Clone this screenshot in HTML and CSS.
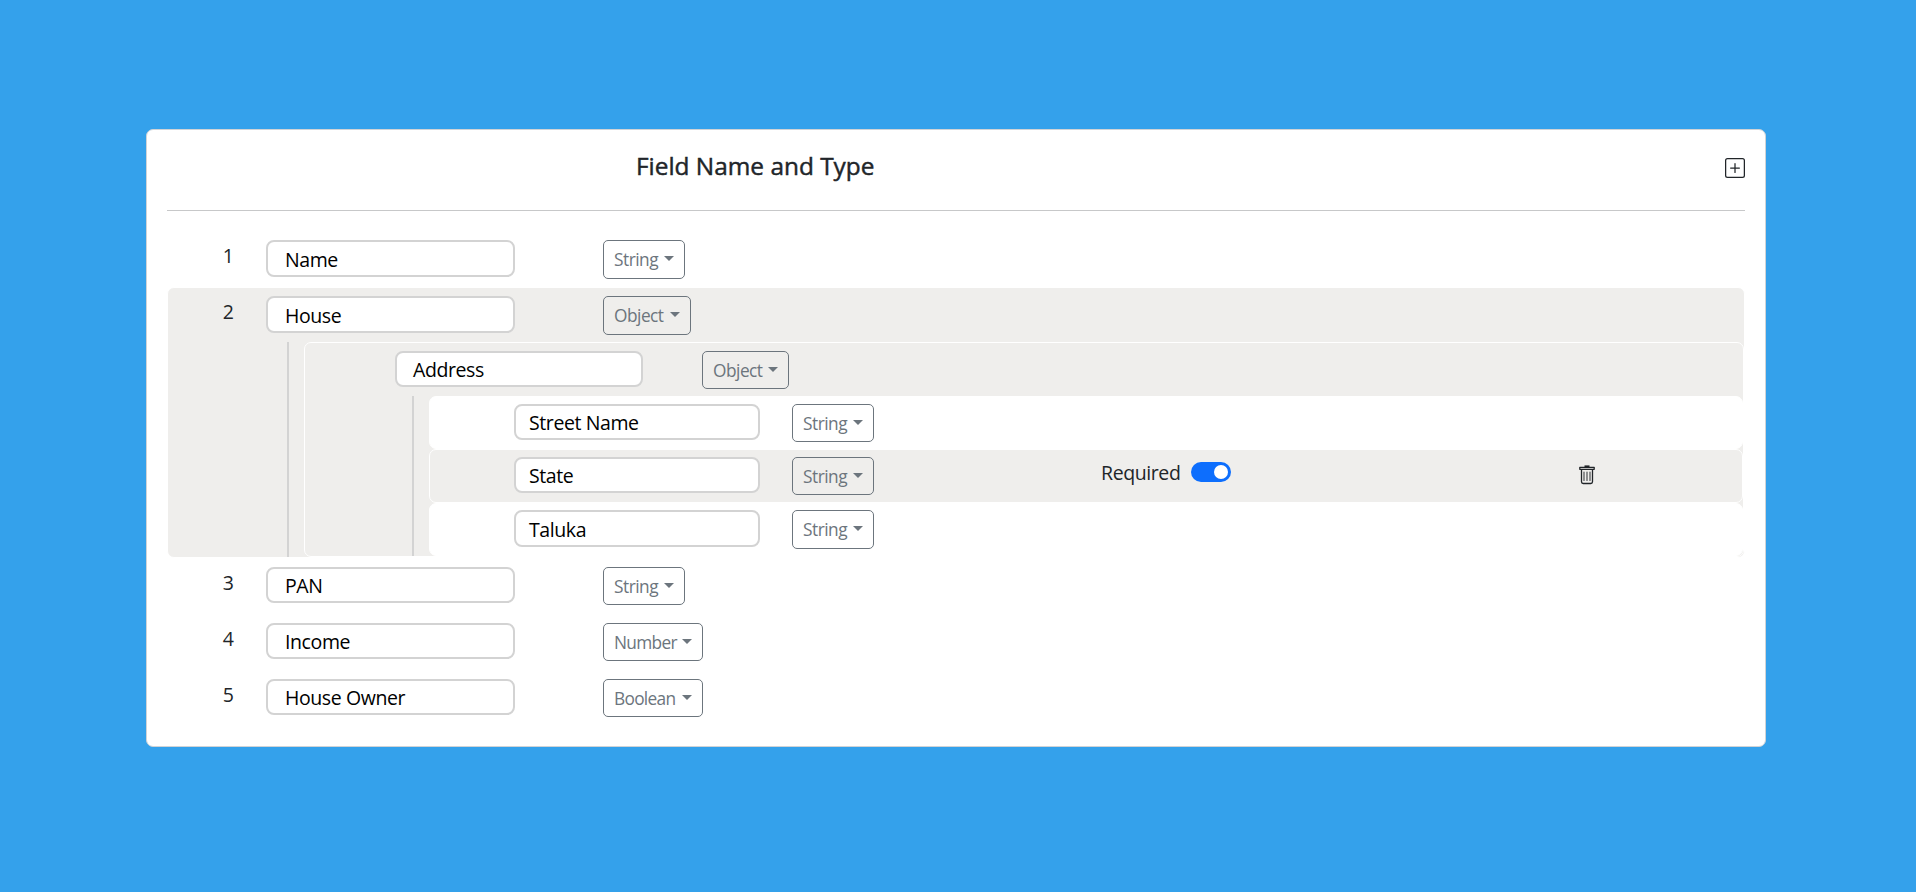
FILE: index.html
```html
<!DOCTYPE html>
<html lang="en">
<head>
<meta charset="utf-8">
<title>Schema Builder</title>
<link rel="stylesheet" href="styles.css">
</head>
<body>
<main class="card">
  <header class="card-header">
    <h1 class="title">Field Name and Type</h1>
    <svg class="icon-add" width="20" height="20" viewBox="0 0 16 16" fill="currentColor"><path d="M14 1a1 1 0 0 1 1 1v12a1 1 0 0 1-1 1H2a1 1 0 0 1-1-1V2a1 1 0 0 1 1-1h12zM2 0a2 2 0 0 0-2 2v12a2 2 0 0 0 2 2h12a2 2 0 0 0 2-2V2a2 2 0 0 0-2-2H2z"/><path d="M8 4a.5.5 0 0 1 .5.5v3h3a.5.5 0 0 1 0 1h-3v3a.5.5 0 0 1-1 0v-3h-3a.5.5 0 0 1 0-1h3v-3A.5.5 0 0 1 8 4z"/></svg>
  </header>
  <section class="rows">
    <div class="row">
      <div class="line"><span class="num">1</span><div class="field tall">Name</div><button class="type tall string">String</button></div>
    </div>
    <div class="row active group">
      <div class="line"><span class="num">2</span><div class="field tall">House</div><button class="type tall object">Object</button></div>
      <div class="children">
        <div class="row active nested">
          <div class="line"><div class="field">Address</div><button class="type object">Object</button></div>
          <div class="children inner">
            <div class="row leaf"><div class="line"><div class="field">Street Name</div><button class="type string">String</button></div></div>
            <div class="row leaf active">
              <div class="line"><div class="field">State</div><button class="type string">String</button>
                <div class="required"><span class="req-label">Required</span><span class="switch"><span class="knob"></span></span></div>
                <svg class="icon-trash" width="16" height="20" viewBox="0 0 16 20"><path class="lid" d="M.8 2.300h14.400v2H.8z"/><path class="handle" d="M5.500 1.200h5"/><path class="bin" d="M2.500 4.800v12a1.700 1.700 0 0 0 1.700 1.700h7.600a1.700 1.700 0 0 0 1.700-1.700v-12"/><path class="slots" d="M5 7v8.500M8 7v8.500M11 7v8.500"/></svg>
              </div>
            </div>
            <div class="row leaf"><div class="line"><div class="field tall">Taluka</div><button class="type tall string">String</button></div></div>
          </div>
        </div>
      </div>
    </div>
    <div class="row">
      <div class="line"><span class="num">3</span><div class="field">PAN</div><button class="type string">String</button></div>
    </div>
    <div class="row">
      <div class="line"><span class="num">4</span><div class="field">Income</div><button class="type wide">Number</button></div>
    </div>
    <div class="row">
      <div class="line"><span class="num">5</span><div class="field">House Owner</div><button class="type wide">Boolean</button></div>
    </div>
  </section>
</main>
</body>
</html>
```
FILE: styles.css
```css
* { box-sizing: border-box; }
body {
  margin: 0;
  height: 892px;
  padding: 129px 150px 0 146px;
  background: #34a1eb;
  color: #212529;
  font-family: "Open Sans", "Noto Sans", sans-serif;
  font-size: 19.5px;
  letter-spacing: -0.4px;
}
.card {
  height: 618px;
  padding: 0 20px;
  background: #fff;
  border: 1px solid #d0d3d6;
  border-radius: 7px;
}
.card-header {
  display: flex;
  justify-content: space-between;
  height: 81px;
  border-bottom: 1px solid #c7c8c9;
  margin-bottom: 20px;
}
.title {
  margin: 18px 0 0 469px;
  font-size: 24.4px;
  line-height: 36px;
  font-weight: 500;
  letter-spacing: 0;
  -webkit-text-stroke: 0.45px #212529;
  white-space: nowrap;
}
.icon-add { margin-top: 28px; }
.row {
  border: 1px solid #fff;
  border-radius: 7px;
}
.active { background: #efeeec; }
.line {
  display: flex;
  align-items: flex-start;
  height: 54px;
  padding-top: 8px;
}
.num {
  width: 22px;
  margin: 1px 27px 0 49px;
  line-height: 30px;
  text-align: center;
}
.field {
  width: 249px;
  height: 36px;
  padding-left: 17px;
  border: 2px solid #d3d3d3;
  border-radius: 8px;
  background: #fff;
  color: #000;
  line-height: 34px;
  white-space: nowrap;
}
.field.tall { height: 37px; line-height: 36px; }
.type {
  display: flex;
  align-items: center;
  width: 82px;
  height: 38px;
  margin-left: 88px;
  padding: 0 10px;
  border: 1px solid #6c757d;
  border-radius: 5px;
  background: transparent;
  color: #6c757d;
  font: 400 17.3px "Open Sans", sans-serif;
  letter-spacing: -0.5px;
}
.type.tall { height: 39px; }
.type::after {
  content: "";
  margin: -2px 0 0 auto;
  border: 5px solid transparent;
  border-top-color: #6c757d;
  border-bottom: 0;
}
.type.object { width: 88px; }
.type.wide { width: 100px; letter-spacing: -0.7px; }
.children {
  margin-left: 119px;
  padding-left: 15px;
  border-left: 2px solid #d3d3d3;
}
.nested > .line { height: 53px; }
.nested > .line .field { width: 248px; margin-left: 90px; padding-left: 16px; }
.nested > .line .type { width: 87px; margin-left: 59px; }
.inner { margin-left: 107px; }
.leaf { height: 53px; background-color: #fff; }
.leaf.active { height: 54px; background: #efeeec; }
.leaf .line { height: 51px; padding-top: 7px; }
.leaf:last-child .line { padding-top: 6px; }
.leaf .field { width: 246px; margin-left: 84px; padding-left: 13px; }
.leaf .type { margin-left: 32px; }
.required {
  display: flex;
  align-items: center;
  height: 30px;
  margin-left: 227px;
}
.req-label { width: 90px; padding-top: 1px; }
.switch {
  display: flex;
  justify-content: flex-end;
  width: 40px;
  height: 20px;
  padding: 3px;
  border-radius: 10px;
  background: #0d6efd;
}
.knob {
  width: 14px;
  height: 14px;
  border-radius: 50%;
  background: #fff;
}
.icon-trash {
  margin: 8px 0 0 348px;
  fill: none;
  stroke: #212529;
  stroke-width: 1.3;
}
.icon-trash .lid { stroke-linejoin: round; }
.icon-trash .handle { stroke-width: 1.6; }
.icon-trash .slots { stroke: #4d5054; stroke-width: 1.2; stroke-linecap: round; }
```
